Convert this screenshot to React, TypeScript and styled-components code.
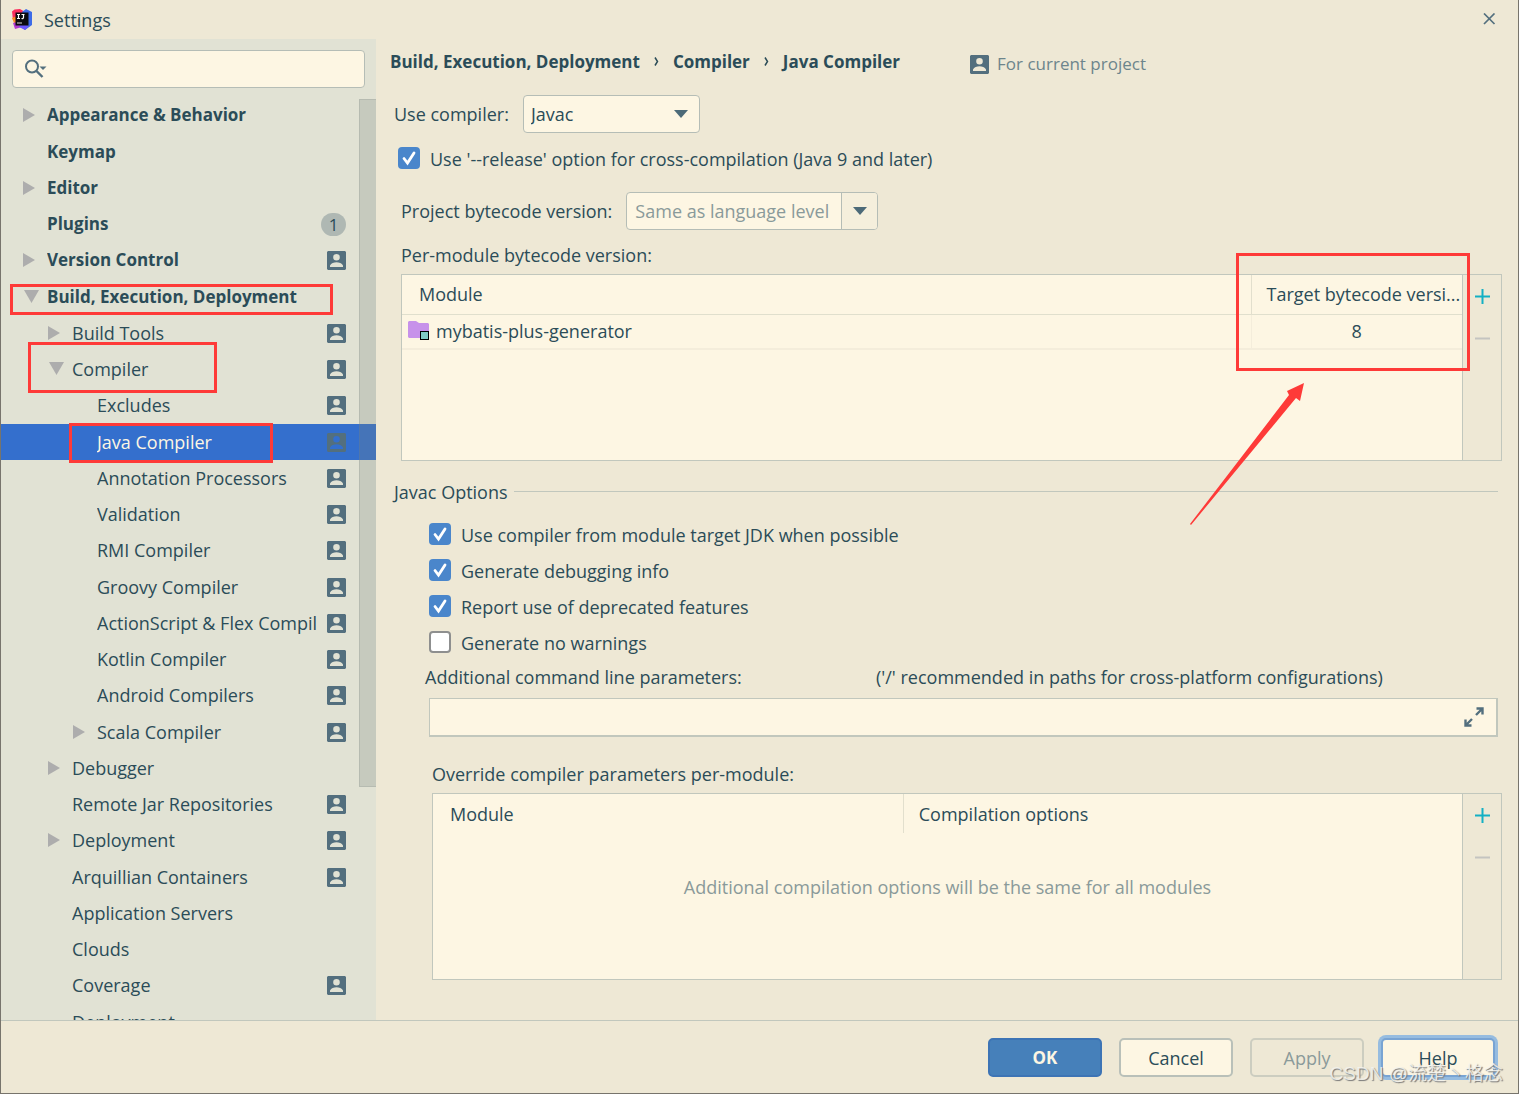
import React from 'react';
import styled, { createGlobalStyle, css } from 'styled-components';

const color = {
  panel: '#eee8d5',
  sidebar: '#e1e2d4',
  field: '#fdf6e3',
  line: '#c1c7bd',
  text: '#2b4c58',
  muted: '#8a9a9a',
  icon: '#536f7e',
  accent: '#4a86cb',
  selected: '#346fcd',
  mark: '#fe3a38',
};

const GlobalStyle = createGlobalStyle`
  *, *::before, *::after { box-sizing: border-box; }
  body { margin: 0; background: ${color.panel}; }
  body, button, input, select, table {
    font-family: 'Open Sans', 'Noto Sans', 'Noto Sans CJK SC', sans-serif;
    font-size: 18px;
    line-height: 24px;
    color: ${color.text};
  }
  button, input, select { margin: 0; padding: 0; border: 0; outline: 0; background: none; }
`;

const Dialog = styled.div`
  position: relative;
  display: flex;
  flex-direction: column;
  height: 100vh;
  overflow: hidden;
  border: 1px solid #77746c;
  border-top: 0;
  background: ${color.panel};
`;

const TitleBar = styled.header`
  display: flex;
  align-items: center;
  flex: none;
  gap: 11px;
  height: 39px;
  padding: 0 22px 0 11px;
`;

const Title = styled.h1`
  flex: 1;
  margin: 0;
  font-size: 18px;
  font-weight: 400;
`;

const IconButton = styled.button`
  display: flex;
  align-items: center;
  justify-content: center;
`;

const Body = styled.div`
  display: flex;
  flex: 1;
  min-height: 0;
`;

const Sidebar = styled.aside`
  position: relative;
  display: flex;
  flex-direction: column;
  flex: none;
  width: 375px;
  overflow: hidden;
  background: ${color.sidebar};
`;

const SearchBox = styled.label`
  display: flex;
  align-items: center;
  flex: none;
  gap: 8px;
  height: 38px;
  margin: 11px 11px 9px;
  padding: 0 12px;
  border: 1px solid #b5bdb6;
  border-radius: 4px;
  background: ${color.field};
  input { flex: 1; min-width: 0; }
`;

const Tree = styled.ul`
  margin: 0;
  padding: 0;
  list-style: none;
`;

const TreeItem = styled.li`
  height: 36px;
  &:nth-child(4n + 1) { height: 37px; }
`;

const TreeRow = styled.button<{ $depth: number; $bold?: boolean; $selected?: boolean }>`
  display: flex;
  align-items: center;
  width: 100%;
  height: 36px;
  padding: 0 30px 0 ${p => 21 + p.$depth * 25}px;
  text-align: left;
  ${p => p.$bold && css`
    font-size: 17px;
    font-weight: 700;
  `}
  ${p => p.$selected && css`
    color: ${color.field};
    background: ${color.selected};
  `}
`;

const ArrowSlot = styled.span`
  display: flex;
  flex: none;
  width: 25px;
`;

const RowLabel = styled.span`
  flex: 1;
  min-width: 0;
  overflow: hidden;
  white-space: nowrap;
`;

const Badge = styled.span`
  width: 25px;
  height: 23px;
  border-radius: 12px;
  line-height: 23px;
  text-align: center;
  font-weight: 400;
  background: #afb8b3;
`;

const ScrollThumb = styled.div`
  position: absolute;
  top: 60px;
  right: 0;
  width: 17px;
  height: 688px;
  border: 1px solid rgba(120, 130, 125, 0.2);
  border-right: 0;
  background: rgba(120, 130, 125, 0.25);
`;

const Main = styled.main`
  flex: 1;
  min-width: 0;
  padding: 11px 16px 0 14px;
`;

const Heading = styled.div`
  display: flex;
  align-items: center;
  height: 24px;
`;

const Crumbs = styled.nav`
  display: flex;
  align-items: center;
  gap: 14px;
  font-size: 17px;
  font-weight: 700;
  white-space: nowrap;
`;

const Scope = styled.div`
  display: flex;
  align-items: center;
  gap: 8px;
  margin-left: 70px;
  padding-top: 4px;
  font-size: 17px;
  color: #6d858c;
`;

const FormRow = styled.div<{ $top: number; $indent: number; $gap?: number }>`
  display: flex;
  align-items: center;
  gap: ${p => p.$gap ?? 14}px;
  margin-top: ${p => p.$top}px;
  padding-left: ${p => p.$indent}px;
  white-space: nowrap;
`;

const SelectBox = styled.div`
  display: grid;
  align-items: center;
  width: 177px;
  height: 38px;
  border: 1px solid #b5bdb6;
  border-radius: 4px;
  background: ${color.field};
  > * { grid-area: 1 / 1; }
  select { height: 36px; padding-left: 7px; appearance: none; }
  svg { justify-self: end; margin-right: 11px; pointer-events: none; }
`;

const ComboBox = styled.div`
  display: flex;
  width: 252px;
  height: 38px;
  overflow: hidden;
  border: 1px solid #b5bdb6;
  border-radius: 4px;
  background: ${color.field};
  input { flex: 1; min-width: 0; padding-left: 8px; }
  input::placeholder { color: ${color.muted}; opacity: 1; }
  button { width: 36px; border-left: 1px solid #b5bdb6; background: #f5efdc; }
`;

const CheckLabel = styled.label`
  display: flex;
  align-items: center;
  gap: 10px;
  height: 36px;
`;

const CheckBox = styled.span`
  display: grid;
  place-items: center;
  width: 22px;
  height: 22px;
  margin-bottom: 2px;
  > * { grid-area: 1 / 1; }
  svg { pointer-events: none; }
  input {
    width: 22px;
    height: 22px;
    appearance: none;
    border: 2px solid #8e8f8f;
    border-radius: 4px;
    background: #fff;
  }
  input:checked { border: 0; background: ${color.accent}; }
  input:not(:checked) + svg { visibility: hidden; }
`;

const TableFrame = styled.div<{ $indent: number }>`
  display: flex;
  height: 187px;
  margin-left: ${p => p.$indent}px;
  border: 1px solid ${color.line};
`;

const DataTable = styled.table`
  flex: 1;
  width: 100%;
  align-self: flex-start;
  border-collapse: collapse;
  table-layout: fixed;
  th, td { padding: 0; font-weight: 400; text-align: left; white-space: nowrap; }
  th { padding-left: 17px; }
  th + th { padding-left: 15px; border-left: 1px solid #e2dfcd; }
`;

const TableArea = styled.div`
  flex: 1;
  min-width: 0;
  background: ${color.field};
`;

const HeadRow = styled.tr<{ $ruled?: boolean }>`
  height: 39px;
  ${p => p.$ruled && css`border-bottom: 1px solid #e0dfcd;`}
`;

const ModuleRow = styled.tr`
  height: 35px;
  border-bottom: 2px solid #f4eddb;
  td + td { text-align: center; border-left: 1px solid #f4eddb; }
`;

const ModuleName = styled.span`
  display: flex;
  align-items: center;
  gap: 6px;
  padding-left: 6px;
`;

const EmptyRow = styled.tr`
  height: 108px;
  td { text-align: center; color: ${color.muted}; }
`;

const SideTools = styled.div`
  display: flex;
  flex-direction: column;
  align-items: center;
  width: 39px;
  padding-top: 10px;
  gap: 20px;
  border-left: 1px solid ${color.line};
  button { height: 22px; }
`;

const Group = styled.fieldset`
  min-width: 0;
  margin: 19px 0 0;
  padding: 0;
  border: 0;
`;

const GroupTitle = styled.legend`
  display: flex;
  align-items: center;
  gap: 6px;
  width: 100%;
  padding: 0 4px;
  &::after { content: ''; flex: 1; height: 1px; margin-bottom: 2px; background: ${color.line}; }
`;

const Checks = styled.div`
  padding: 13px 0 0 39px;
`;

const ParamsLabels = styled.div`
  display: grid;
  grid-template-columns: 451px 1fr;
  margin-top: 4px;
  padding-left: 35px;
  white-space: nowrap;
`;

const ParamsField = styled.div`
  display: flex;
  align-items: center;
  height: 39px;
  margin: 9px 4px 0 39px;
  padding-right: 12px;
  border: 1px solid ${color.line};
  border-right-width: 2px;
  border-bottom-width: 2px;
  background: ${color.field};
  input { flex: 1; min-width: 0; height: 36px; padding-left: 8px; }
`;

const Caption = styled.div<{ $top: number; $bottom: number; $indent: number }>`
  margin: ${p => p.$top}px 0 ${p => p.$bottom}px ${p => p.$indent}px;
`;

const Footer = styled.footer`
  display: flex;
  justify-content: flex-end;
  flex: none;
  gap: 17px;
  height: 73px;
  padding: 17px 23px 0;
  border-top: 1px solid ${color.line};
`;

const Button = styled.button<{ $kind?: 'primary' | 'focused' }>`
  width: 114px;
  height: 39px;
  border: 2px solid #b9c0b9;
  border-radius: 5px;
  background: ${color.field};
  &:disabled { color: ${color.muted}; border-color: #cccdc0; background: none; }
  ${p => p.$kind === 'primary' && css`
    font-size: 17px;
    font-weight: 700;
    color: ${color.field};
    border-color: #3d74b5;
    background: #4680ba;
  `}
  ${p => p.$kind === 'focused' && css`
    border-color: #79a4d3;
    box-shadow: 0 0 0 3px #96bce0;
  `}
`;

const Watermark = styled.div`
  position: absolute;
  right: 15px;
  bottom: 7px;
  font-family: 'Liberation Sans', 'Noto Sans CJK SC', sans-serif;
  font-size: 19px;
  color: rgba(245, 245, 240, 0.85);
  text-shadow: 1px 1px 1px #777;
  white-space: nowrap;
`;

const Mark = styled.div<{ $x: number; $y: number; $w: number; $h: number }>`
  position: absolute;
  left: ${p => p.$x}px;
  top: ${p => p.$y}px;
  width: ${p => p.$w}px;
  height: ${p => p.$h}px;
  border: 3px solid ${color.mark};
  pointer-events: none;
`;

const MarkArrow = styled.svg`
  position: absolute;
  left: 1188px;
  top: 382px;
  pointer-events: none;
`;

const LogoIcon = () => (
  <svg width="21" height="21" viewBox="0 0 21 21" aria-hidden="true">
    <path d="M0 2.500 2.500 0.500 8 0l5 3-2 9-10-1z" fill="#fb2d5c" />
    <path d="M0 9l5-2 3 7-6 0z" fill="#fb8a24" />
    <path d="M1 14l8-2 1 6-7 2z" fill="#b13ad0" />
    <path d="M10 3l4-3 6 3v13l-7 5-5-4z" fill="#3d6be8" />
    <path d="M9 15l8 2-4 4-6-3z" fill="#6b57ff" />
    <rect x="3.500" y="3.500" width="13" height="13" fill="#0b0b10" />
    <path d="M5 5.500h3M6.500 5.500v4M5 9.500h3M9.500 5.500h3M11.500 5.500v3q0 1.300-2 1" stroke="#fff" strokeWidth="1.200" fill="none" />
    <path d="M5 14h5" stroke="#bbb" strokeWidth="1.200" />
  </svg>
);

const CloseIcon = () => (
  <svg width="13" height="13" viewBox="0 0 13 13" aria-hidden="true">
    <path d="M1 0.500l10.500 10.500M11.500 0.500L1 11" stroke={color.icon} strokeWidth="1.700" />
  </svg>
);

const SearchIcon = () => (
  <svg width="22" height="20" viewBox="0 0 22 20" aria-hidden="true">
    <circle cx="7" cy="7.500" r="6" fill="none" stroke={color.icon} strokeWidth="2" />
    <path d="M11.500 12l6 6" stroke={color.icon} strokeWidth="2.400" />
    <path d="M14.500 7.500h7l-3.500 3.500z" fill={color.icon} />
  </svg>
);

const ProjectIcon = () => (
  <svg width="19" height="19" viewBox="0 0 19 19" aria-hidden="true">
    <path
      fillRule="evenodd"
      fill={color.icon}
      d="M1 0h17l1 1v17l-1 1H1l-1-1V1zM9.500 3a3.300 3.300 0 1 0 0 6.600a3.300 3.300 0 1 0 0-6.600zM3 16h13v-1.500c-1-2.500-4-3.200-6.500-3.200S4 12 3 14.500z"
    />
  </svg>
);

const TreeArrow = ({ open }: { open: boolean }) =>
  open ? (
    <svg width="17" height="16" viewBox="0 0 17 16" aria-hidden="true">
      <path d="M2 1h15L9.500 14z" fill="#adadad" />
    </svg>
  ) : (
    <svg width="14" height="16" viewBox="0 0 14 16" aria-hidden="true">
      <path d="M1 1l12 7L1 15z" fill="#adadad" />
    </svg>
  );

const DownIcon = () => (
  <svg width="14" height="8" viewBox="0 0 14 8" aria-hidden="true">
    <path d="M0 0h14L7 8z" fill="#4c6a78" />
  </svg>
);

const ChevronIcon = () => (
  <svg width="5" height="13" viewBox="0 0 5 13" aria-hidden="true">
    <path d="M1 1.500l2.500 4L1 9.500" stroke={color.text} strokeWidth="1.500" fill="none" />
  </svg>
);

const CheckIcon = () => (
  <svg width="16" height="16" viewBox="0 0 16 16" aria-hidden="true">
    <path d="M3 8.500l3.500 4.500L13 3" stroke="#fff" strokeWidth="2.800" fill="none" strokeLinecap="round" />
  </svg>
);

const FolderIcon = () => (
  <svg width="22" height="20" viewBox="0 0 22 20" aria-hidden="true">
    <path d="M1 0h7l3 2h9l1 1v13l-1 1H1l-1-1V1z" fill="#c792ea" />
    <rect x="12.500" y="10.500" width="8" height="8" fill="#80cbc4" stroke="#000" />
  </svg>
);

const PlusIcon = () => (
  <svg width="15" height="15" viewBox="0 0 15 15" aria-hidden="true">
    <path d="M0 7.500h15M7.500 0v15" stroke="#14b0c4" strokeWidth="2" />
  </svg>
);

const MinusIcon = () => (
  <svg width="15" height="15" viewBox="0 0 15 15" aria-hidden="true">
    <path d="M0 7.500h15" stroke="#c4c4c0" strokeWidth="2" />
  </svg>
);

const ExpandIcon = () => (
  <svg width="20" height="20" viewBox="0 0 20 20" aria-hidden="true">
    <path d="M12.500 1.500h6V7.500M18 2l-6 6M7.500 18.500H1.500V12.500M2 18l6-6" stroke={color.icon} strokeWidth="2.400" fill="none" />
  </svg>
);

type Item = {
  label: string;
  depth: number;
  arrow?: 'open' | 'closed';
  project?: boolean;
  badge?: string;
  selected?: boolean;
};

const items: Item[] = [
  { label: 'Appearance & Behavior', depth: 0, arrow: 'closed' },
  { label: 'Keymap', depth: 0 },
  { label: 'Editor', depth: 0, arrow: 'closed' },
  { label: 'Plugins', depth: 0, badge: '1' },
  { label: 'Version Control', depth: 0, arrow: 'closed', project: true },
  { label: 'Build, Execution, Deployment', depth: 0, arrow: 'open' },
  { label: 'Build Tools', depth: 1, arrow: 'closed', project: true },
  { label: 'Compiler', depth: 1, arrow: 'open', project: true },
  { label: 'Excludes', depth: 2, project: true },
  { label: 'Java Compiler', depth: 2, project: true, selected: true },
  { label: 'Annotation Processors', depth: 2, project: true },
  { label: 'Validation', depth: 2, project: true },
  { label: 'RMI Compiler', depth: 2, project: true },
  { label: 'Groovy Compiler', depth: 2, project: true },
  { label: 'ActionScript & Flex Compil', depth: 2, project: true },
  { label: 'Kotlin Compiler', depth: 2, project: true },
  { label: 'Android Compilers', depth: 2, project: true },
  { label: 'Scala Compiler', depth: 2, arrow: 'closed', project: true },
  { label: 'Debugger', depth: 1, arrow: 'closed' },
  { label: 'Remote Jar Repositories', depth: 1, project: true },
  { label: 'Deployment', depth: 1, arrow: 'closed', project: true },
  { label: 'Arquillian Containers', depth: 1, project: true },
  { label: 'Application Servers', depth: 1 },
  { label: 'Clouds', depth: 1 },
  { label: 'Coverage', depth: 1, project: true },
  { label: 'Deployment', depth: 1 },
];

const options = [
  { label: 'Use compiler from module target JDK when possible', on: true },
  { label: 'Generate debugging info', on: true },
  { label: 'Report use of deprecated features', on: true },
  { label: 'Generate no warnings', on: false },
];

const Check = ({ label, on }: { label: string; on: boolean }) => (
  <CheckLabel>
    <CheckBox>
      <input type="checkbox" defaultChecked={on} />
      <CheckIcon />
    </CheckBox>
    {label}
  </CheckLabel>
);

const Tools = () => (
  <SideTools>
    <IconButton type="button" aria-label="Add"><PlusIcon /></IconButton>
    <IconButton type="button" aria-label="Remove" disabled><MinusIcon /></IconButton>
  </SideTools>
);

export default function App() {
  return (
    <>
      <GlobalStyle />
      <Dialog>
        <TitleBar>
          <LogoIcon />
          <Title>Settings</Title>
          <IconButton type="button" aria-label="Close"><CloseIcon /></IconButton>
        </TitleBar>

        <Body>
          <Sidebar>
            <SearchBox>
              <SearchIcon />
              <input type="text" aria-label="Search settings" />
            </SearchBox>
            <Tree>
              {items.map((item, i) => (
                <TreeItem key={i}>
                  <TreeRow type="button" $depth={item.depth} $bold={item.depth === 0} $selected={item.selected}>
                    <ArrowSlot>{item.arrow && <TreeArrow open={item.arrow === 'open'} />}</ArrowSlot>
                    <RowLabel>{item.label}</RowLabel>
                    {item.badge && <Badge>{item.badge}</Badge>}
                    {item.project && <ProjectIcon />}
                  </TreeRow>
                </TreeItem>
              ))}
            </Tree>
            <ScrollThumb />
          </Sidebar>

          <Main>
            <Heading>
              <Crumbs aria-label="Breadcrumb">
                <span>Build, Execution, Deployment</span>
                <ChevronIcon />
                <span>Compiler</span>
                <ChevronIcon />
                <span>Java Compiler</span>
              </Crumbs>
              <Scope><ProjectIcon />For current project</Scope>
            </Heading>

            <FormRow $top={21} $indent={4}>
              <label htmlFor="compiler">Use compiler:</label>
              <SelectBox>
                <select id="compiler" defaultValue="Javac"><option>Javac</option></select>
                <DownIcon />
              </SelectBox>
            </FormRow>
            <FormRow $top={8} $indent={8}>
              <Check label="Use '--release' option for cross-compilation (Java 9 and later)" on />
            </FormRow>
            <FormRow $top={15} $indent={11}>
              <label htmlFor="bytecode">Project bytecode version:</label>
              <ComboBox>
                <input id="bytecode" type="text" placeholder="Same as language level" />
                <IconButton type="button" aria-label="Show versions"><DownIcon /></IconButton>
              </ComboBox>
            </FormRow>

            <Caption $top={13} $bottom={7} $indent={11}>Per-module bytecode version:</Caption>
            <TableFrame $indent={11}>
              <TableArea>
                <DataTable>
                  <colgroup><col /><col style={{ width: 211 }} /></colgroup>
                  <thead>
                    <HeadRow $ruled><th>Module</th><th>Target bytecode versi...</th></HeadRow>
                  </thead>
                  <tbody>
                    <ModuleRow>
                      <td><ModuleName><FolderIcon />mybatis-plus-generator</ModuleName></td>
                      <td>8</td>
                    </ModuleRow>
                  </tbody>
                </DataTable>
              </TableArea>
              <Tools />
            </TableFrame>

            <Group>
              <GroupTitle>Javac Options</GroupTitle>
              <Checks>
                {options.map(o => <Check key={o.label} {...o} />)}
              </Checks>
              <ParamsLabels>
                <label htmlFor="params">Additional command line parameters:</label>
                <span>('/' recommended in paths for cross-platform configurations)</span>
              </ParamsLabels>
              <ParamsField>
                <input id="params" type="text" />
                <IconButton type="button" aria-label="Expand"><ExpandIcon /></IconButton>
              </ParamsField>
              <Caption $top={25} $bottom={7} $indent={42}>Override compiler parameters per-module:</Caption>
              <TableFrame $indent={42}>
                <TableArea>
                  <DataTable>
                    <colgroup><col style={{ width: '45.700%' }} /><col /></colgroup>
                    <thead>
                      <HeadRow><th>Module</th><th>Compilation options</th></HeadRow>
                    </thead>
                    <tbody>
                      <EmptyRow><td colSpan={2}>Additional compilation options will be the same for all modules</td></EmptyRow>
                    </tbody>
                  </DataTable>
                </TableArea>
                <Tools />
              </TableFrame>
            </Group>
          </Main>
        </Body>

        <Footer>
          <Button type="button" $kind="primary">OK</Button>
          <Button type="button">Cancel</Button>
          <Button type="button" disabled>Apply</Button>
          <Button type="button" $kind="focused">Help</Button>
        </Footer>

        <Mark $x={9} $y={284} $w={323} $h={31} />
        <Mark $x={27} $y={342} $w={189} $h={51} />
        <Mark $x={68} $y={423} $w={204} $h={40} />
        <Mark $x={1235} $y={253} $w={234} $h={118} />
        <MarkArrow width="118" height="146" viewBox="0 0 118 146" aria-hidden="true">
          <path d="M1 142L100 13L98 9L115 1L111 19L107 16L2 143z" fill={color.mark} />
        </MarkArrow>
        <Watermark>CSDN @流楚丶格念</Watermark>
      </Dialog>
    </>
  );
}
